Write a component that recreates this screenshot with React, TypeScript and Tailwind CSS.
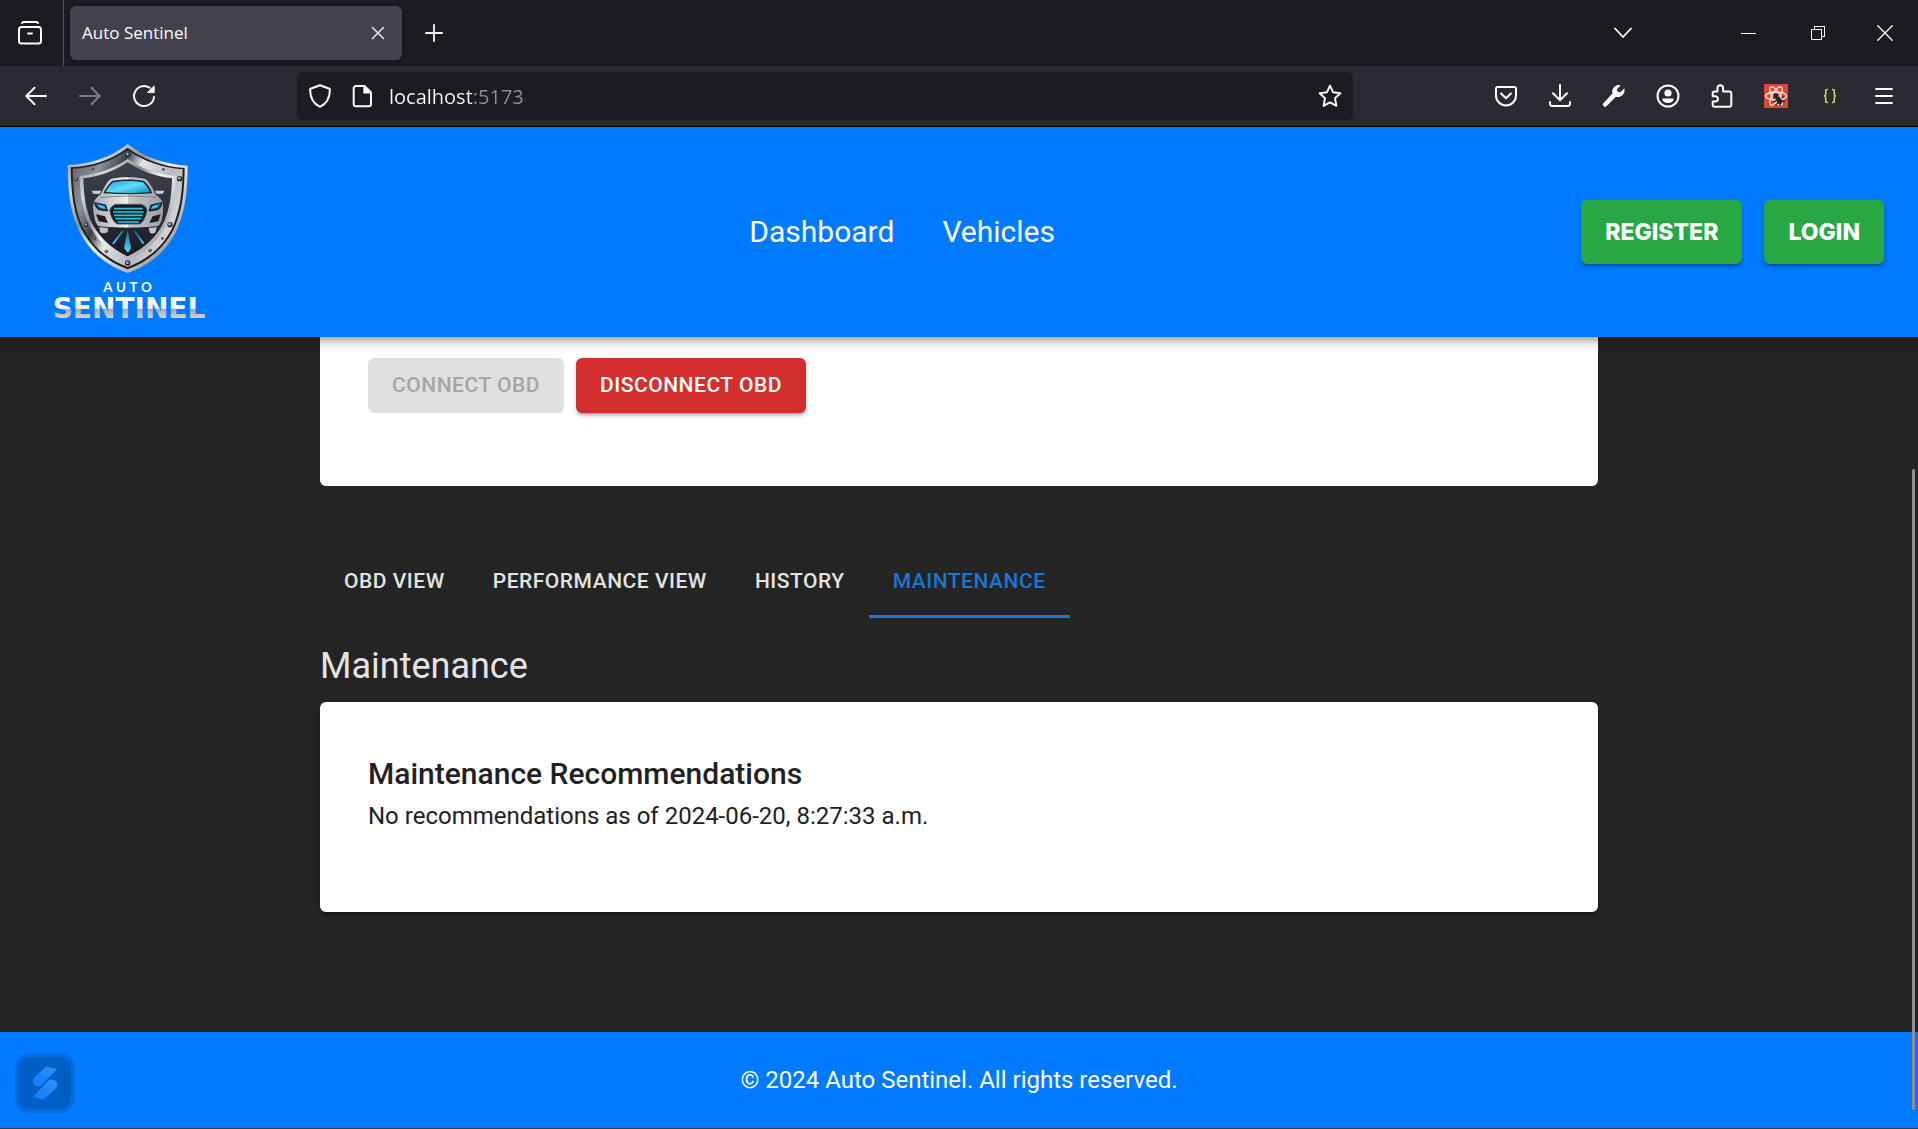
import type { ReactNode } from "react";

/* ---------- browser icons ---------- */

type IconProps = { size?: number; box?: string; sw?: number; className?: string; children: ReactNode };

function Icon({ size = 24, box = "0 0 24 24", sw = 2, className = "", children }: IconProps) {
  return (
    <svg
      aria-hidden="true"
      width={size}
      height={size}
      viewBox={box}
      fill="none"
      stroke="currentColor"
      strokeWidth={sw}
      strokeLinecap="round"
      strokeLinejoin="round"
      className={className}
    >
      {children}
    </svg>
  );
}

function ChromeButton({ label, className = "", children }: { label: string; className?: string; children: ReactNode }) {
  return (
    <button type="button" aria-label={label} className={"flex h-12 items-center justify-center " + className}>
      {children}
    </button>
  );
}

function ReactDevIcon() {
  return (
    <svg aria-hidden="true" width="24" height="24" viewBox="0 0 24 24" fill="none">
      <rect width="24" height="24" rx="1" fill="#da4735" />
      <g stroke="#fbe9e6" strokeWidth="1.3">
        <ellipse cx="12" cy="12" rx="10.4" ry="4" />
        <ellipse cx="12" cy="12" rx="10.4" ry="4" transform="rotate(60 12 12)" />
        <ellipse cx="12" cy="12" rx="10.4" ry="4" transform="rotate(120 12 12)" />
      </g>
      <g fill="#2b201d">
        <ellipse cx="15" cy="16.4" rx="2.6" ry="4" transform="rotate(-35 15 16.4)" />
        <circle cx="11.8" cy="11.7" r="2.2" />
      </g>
      <path
        d="M12 17l-3 .6M13.5 19l-2 2.4M17.5 14l2.8-1.2M18 17l2.6.6M15.8 20l.4 2M11 14.5l-2-.6"
        stroke="#2b201d"
        strokeWidth="1.3"
      />
    </svg>
  );
}

function TitleBar() {
  return (
    <div className="flex h-[66px] bg-[#1c1b22]">
      <ChromeButton label="Recent browsing" className="h-[66px]! w-16 border-r border-[#55545c] pr-[3px]">
        <Icon>
          <path d="M4 2C4.500 1.400 5 1.100 6 1.100h12c1 0 1.500.300 2 .900" />
          <rect x="1" y="6" width="22" height="16.500" rx="2.500" />
          <path d="M10 12.500h4" />
        </Icon>
      </ChromeButton>
      <div className="flex flex-1 items-center pl-1.5">
        <div className="flex h-[54px] w-[332px] items-center justify-between rounded-md bg-[#42414d] pl-3 pr-[17px] shadow-[0_0_4px_rgba(0,0,0,0.5)]">
          <span className="text-[17px] text-[#fbfbfe]">Auto Sentinel</span>
          <button type="button" aria-label="Close tab" className="text-[#e6e6ea]">
            <Icon size={14} box="0 0 14 14" sw={1.5}>
              <path d="M1.500 1.500l11 11M12.500 1.500l-11 11" />
            </Icon>
          </button>
        </div>
        <ChromeButton label="New tab" className="w-16">
          <Icon size={18} box="0 0 18 18" sw={1.800}>
            <path d="M9 .9v16.200M.9 9h16.200" />
          </Icon>
        </ChromeButton>
      </div>
      <div className="flex items-center">
        <ChromeButton label="List all tabs" className="w-16">
          <Icon size={18} box="0 0 18 18" sw={1.800}>
            <path d="M1 4.500l8 8.500 8-8.500" />
          </Icon>
        </ChromeButton>
        <div className="ml-[59px] flex">
          <ChromeButton label="Minimize" className="w-[69px]">
            <span className="block h-px w-[15px] bg-white" />
          </ChromeButton>
          <ChromeButton label="Restore" className="w-[69px]">
            <svg aria-hidden="true" width="14" height="14" viewBox="0 0 14 14" fill="none" stroke="white" shapeRendering="crispEdges">
              <path d="M.5 3.500h10v10h-10zM3.500 3v-2.500h10v10h-3" />
            </svg>
          </ChromeButton>
          <ChromeButton label="Close window" className="w-[66px]">
            <Icon size={16} box="0 0 16 16" sw={1.300}>
              <path d="M.8.8l14.400 14.400M15.200.8L.8 15.200" />
            </Icon>
          </ChromeButton>
        </div>
      </div>
    </div>
  );
}

function ToolBar() {
  return (
    <div className="flex h-[61px] items-center border-b border-black bg-[#2b2a33]">
      <div className="flex w-[297px] pl-[9px]">
        <ChromeButton label="Back" className="w-[54px]">
          <Icon>
            <path d="M22 12H2.500M10.500 3.800L2.300 12l8.200 8.200" />
          </Icon>
        </ChromeButton>
        <ChromeButton label="Forward" className="w-[54px] text-[#7c7b82]">
          <Icon>
            <path d="M2 12h19.500M13.500 3.800l8.200 8.200-8.200 8.200" />
          </Icon>
        </ChromeButton>
        <ChromeButton label="Reload" className="w-[54px]">
          <Icon>
            <path d="M22 13a10 10 0 1 1-4.300-9.200" />
            <path d="M22.200 2.200v6.300h-6.300z" fill="currentColor" strokeWidth="1" />
          </Icon>
        </ChromeButton>
      </div>
      <div className="flex h-12 max-w-[1056px] flex-1 items-center rounded-md bg-[#1c1b22] px-[11px]">
        <button type="button" aria-label="Tracking protection">
          <Icon>
            <path d="M12 1.200l9.500 3.600c.3.100.4.400.4.700 0 7.500-2.400 13.800-9.900 17.300C4.500 19.300 2.100 13 2.100 5.500c0-.3.100-.6.400-.7z" />
          </Icon>
        </button>
        <button type="button" aria-label="Site information" className="ml-[18px]">
          <Icon>
            <path d="M6 2h8.500L21 8.500V20a2.300 2.300 0 0 1-2.300 2.300H6A2.300 2.300 0 0 1 3.700 20V4.300A2.300 2.300 0 0 1 6 2z" />
            <path d="M14 2.200v6.600h6.700z" fill="currentColor" strokeWidth="1.500" />
          </Icon>
        </button>
        <input
          aria-label="Address"
          defaultValue="localhost:5173"
          className="ml-[15px] min-w-0 flex-1 bg-linear-to-r from-[#fbfbfe] from-[83px] to-[#8e8d93] to-[83px] bg-clip-text pt-0.5 text-[20px] text-transparent caret-white outline-none"
        />
        <button type="button" aria-label="Bookmark this page">
          <Icon sw={1.900}>
            <path d="M12 1.600l3.100 6.700 7.300.9-5.400 5 1.400 7.700L12 18.400l-6.400 3.500L7 14.200l-5.400-5 7.300-.9z" />
          </Icon>
        </button>
      </div>
      <div className="ml-auto flex pr-[7px]">
        <ChromeButton label="Save to Pocket" className="w-[54px]">
          <Icon>
            <path d="M4 3h16a2 2 0 0 1 2 2v6.500a10 10 0 0 1-20 0V5a2 2 0 0 1 2-2z" />
            <path d="M7 9.500l5 4.800 5-4.800" />
          </Icon>
        </ChromeButton>
        <ChromeButton label="Downloads" className="w-[54px]">
          <Icon>
            <path d="M12 1v15M5 9.300l7 7 7-7M2 18v1.500A2.500 2.500 0 0 0 4.500 22h15a2.500 2.500 0 0 0 2.500-2.500V18" />
          </Icon>
        </ChromeButton>
        <ChromeButton label="Developer tools" className="w-[54px]">
          <Icon>
            <path
              d="M22 5.500l-3.700 3.200-3.200-.6-.6-3L18 1.600a6 6 0 0 0-7 7.800L1.800 19.300c-.8.900-.6 2 .1 2.700.8.700 1.800.6 2.600-.2L14 12.200A6 6 0 0 0 22 5.500z"
              fill="currentColor"
              strokeWidth="1"
            />
          </Icon>
        </ChromeButton>
        <ChromeButton label="Account" className="w-[54px]">
          <Icon>
            <circle cx="12" cy="12" r="10.500" />
            <circle cx="12" cy="9" r="3.600" fill="currentColor" stroke="none" />
            <path d="M6.300 14.500h11.400c0 2.800-2.500 4.500-5.700 4.500s-5.700-1.700-5.700-4.500z" fill="currentColor" stroke="none" />
          </Icon>
        </ChromeButton>
        <ChromeButton label="Extensions" className="w-[54px]">
          <Icon>
            <path d="M7.500 7.500V4a2.800 2.800 0 0 1 5.600 0v3.500H19.500a1.800 1.800 0 0 1 1.800 1.800V21a1.800 1.800 0 0 1-1.800 1.800H4.500A1.800 1.800 0 0 1 2.700 21v-3.500h2.600a2.600 2.600 0 0 0 0-5.300H2.700v-3a1.800 1.800 0 0 1 1.800-1.700z" />
          </Icon>
        </ChromeButton>
        <ChromeButton label="React developer tools" className="w-[54px]">
          <ReactDevIcon />
        </ChromeButton>
        <ChromeButton label="JSON viewer" className="w-[54px]">
          <span className="flex h-6 w-6 items-center justify-center rounded-full bg-[#2b2b2a]">
            <svg aria-hidden="true" width="14" height="16" viewBox="0 0 14 16" fill="none" stroke="#d9cf6a" strokeWidth="1.600">
              <path d="M5 1.500H4.200C3 1.500 2.700 2.200 2.700 3v3c0 1.200-.7 2-1.700 2 1 0 1.700.8 1.700 2v3c0 .8.3 1.500 1.500 1.500H5M9 1.500h.8c1.200 0 1.500.7 1.500 1.500v3c0 1.200.7 2 1.700 2-1 0-1.700.8-1.700 2v3c0 .8-.3 1.500-1.500 1.500H9" />
            </svg>
          </span>
        </ChromeButton>
        <ChromeButton label="Menu" className="w-[54px]">
          <Icon size={20} box="0 0 20 20" sw={1.800}>
            <path d="M2 3h16M2 10h16M2 17h16" />
          </Icon>
        </ChromeButton>
      </div>
    </div>
  );
}

/* ---------- application ---------- */

function Logo() {
  const rivets: [number, number, number][] = [
    [263, 88, 8],
    [419, 161, 8],
    [108, 162, 6],
    [390, 299, 8],
    [139, 300, 6],
    [263, 414, 8],
    [158, 132, 4],
    [370, 133, 4],
    [367, 340, 4],
    [164, 340, 4],
    [199, 379, 5],
    [330, 376, 5],
  ];
  return (
    <svg role="img" aria-label="Auto Sentinel" width="189" height="210" viewBox="-18 6 567 630">
      <defs>
        <linearGradient id="rim" x1="0" y1="0" x2="1" y2="1">
          <stop offset="0" stopColor="#8e9197" />
          <stop offset="0.2" stopColor="#d5d6d9" />
          <stop offset="0.36" stopColor="#8b8e94" />
          <stop offset="0.5" stopColor="#f3f3f4" />
          <stop offset="0.7" stopColor="#c3c4c8" />
          <stop offset="1" stopColor="#6f7278" />
        </linearGradient>
        <linearGradient id="steel" x1="0" y1="0" x2="1" y2="0.5">
          <stop offset="0" stopColor="#54575f" />
          <stop offset="0.25" stopColor="#8f9298" />
          <stop offset="0.42" stopColor="#3c3f47" />
          <stop offset="0.55" stopColor="#e4e4e6" />
          <stop offset="0.8" stopColor="#b8b9bd" />
          <stop offset="1" stopColor="#d8d8da" />
        </linearGradient>
        <linearGradient id="inner" x1="0" y1="0" x2="0" y2="1">
          <stop offset="0" stopColor="#41444f" />
          <stop offset="1" stopColor="#171a26" />
        </linearGradient>
        <linearGradient id="glass" x1="0" y1="0" x2="1" y2="1">
          <stop offset="0" stopColor="#12a9dc" />
          <stop offset="0.5" stopColor="#5fdcf8" />
          <stop offset="1" stopColor="#0f8fc6" />
        </linearGradient>
        <linearGradient id="beam" x1="0" y1="0" x2="0" y2="1">
          <stop offset="0" stopColor="#0a6d99" />
          <stop offset="1" stopColor="#54dcff" />
        </linearGradient>
        <linearGradient id="body" x1="0" y1="0" x2="1" y2="0">
          <stop offset="0" stopColor="#a8aab0" />
          <stop offset="0.5" stopColor="#f2f2f3" />
          <stop offset="0.5" stopColor="#c9cacd" />
          <stop offset="1" stopColor="#9b9da3" />
        </linearGradient>
        <linearGradient id="word" gradientUnits="userSpaceOnUse" x1="0" y1="518" x2="0" y2="580">
          <stop offset="0" stopColor="#ffffff" />
          <stop offset="0.52" stopColor="#eef1f6" />
          <stop offset="0.56" stopColor="#9fabbc" />
          <stop offset="1" stopColor="#d3d6db" />
        </linearGradient>
      </defs>

      {/* shield layers, from the outer rim to the dark field */}
      <path
        d="M263 57C215 96 150 118 83 120C84 190 88 250 112 306C140 370 190 418 263 444C336 418 388 370 414 306C438 250 442 190 443 122C376 118 311 96 263 57Z"
        fill="url(#rim)"
      />
      <path
        d="M263 68C216 104 155 124 92 127C93 190 97 246 120 302C147 362 195 408 263 433C331 408 379 362 406 302C429 246 433 190 434 129C371 124 310 104 263 68Z"
        fill="#1d2029"
      />
      <path
        d="M263 74C216 109 158 128 98 131C99 190 103 244 125 299C151 358 198 402 263 426C328 402 375 358 401 299C423 244 427 190 428 133C368 128 310 109 263 74Z"
        fill="url(#steel)"
      />
      <path
        d="M263 102C221 131 171 148 119 153C120 202 125 247 143 290C166 340 208 382 263 406C318 382 360 340 383 290C401 247 406 202 407 153C355 148 305 131 263 102Z"
        fill="url(#rim)"
      />
      <path
        d="M263 111C222 139 178 154 130 160C131 203 135 245 152 286C173 333 212 371 263 394C314 371 353 333 374 286C391 245 395 203 396 160C348 154 304 139 263 111Z"
        fill="url(#inner)"
      />
      {rivets.map(([x, y, r]) => (
        <g key={x + "-" + y}>
          <circle cx={x} cy={y} r={r} fill="#23252d" />
          <circle cx={x - 1} cy={y - 1} r={r * 0.55} fill="#a7a9af" />
        </g>
      ))}

      {/* road lights */}
      <path d="M263 314L252 370L264 383L273 370Z" fill="url(#beam)" />
      <path d="M246 316L216 356L222 357L250 320Z" fill="url(#beam)" />
      <path d="M280 316L308 357L313 354L284 316Z" fill="url(#beam)" />

      {/* car */}
      <path d="M175 300h30v20c-8 8-20 8-26 0zM322 300h32l-6 22c-8 8-16 6-20 0z" fill="#c0c1c5" stroke="#23252d" strokeWidth="3" />
      <path
        d="M155 196h30v12h-22c-6 0-8-6-8-12zM374 196h-32v12h22c6 0 10-6 10-12z"
        fill="#c9cace"
        stroke="#23252d"
        strokeWidth="2"
      />
      <path
        d="M212 160C240 153 288 153 316 160C330 170 340 190 348 208C364 218 373 232 371 252C370 276 366 294 356 304C320 311 212 311 174 304C162 292 160 270 158 252C156 230 166 218 180 208C190 190 198 170 212 160Z"
        fill="url(#body)"
        stroke="#23252d"
        strokeWidth="3"
      />
      <path d="M216 168C244 162 284 162 312 168C324 178 332 192 337 205C290 209 238 209 190 205C196 192 206 178 216 168Z" fill="#23252d" />
      <path d="M219 172C246 167 282 167 309 172C318 180 325 191 330 201C288 205 240 205 197 201C202 191 210 180 219 172Z" fill="url(#glass)" />
      <path d="M180 218C225 212 300 212 350 218" stroke="#80838b" strokeWidth="3" fill="none" />
      <path d="M164 233L197 240L203 258L176 254Q166 248 164 233Z" fill="#16384d" stroke="#1b1e28" strokeWidth="3" />
      <path d="M170 237L193 243L197 252L180 249Z" fill="#27c6f3" />
      <path d="M366 233L333 240L327 258L354 254Q364 248 366 233Z" fill="#16384d" stroke="#1b1e28" strokeWidth="3" />
      <path d="M360 237L337 243L333 252L350 249Z" fill="#27c6f3" />
      <path d="M226 238H305Q320 244 321 256Q316 286 300 297H231Q214 286 209 256Q212 244 226 238Z" fill="#171b26" stroke="#55585f" strokeWidth="3" />
      <path d="M222 251H308M219 261H311M222 271H308M226 281H304M233 291H297" stroke="#2fc3dc" strokeWidth="5" />
      <path d="M168 268L195 274L204 294L176 289ZM362 268L338 274L328 294L355 289Z" fill="#1b1e28" />

      {/* word mark */}
      <text x="190" y="501" fontSize="40" fontFamily="Lato, sans-serif" fontWeight="700" letterSpacing="11" fill="#ffffff">
        AUTO
      </text>
      <text x="267" y="579" textAnchor="middle" fontSize="84" fontFamily="'DejaVu Sans', sans-serif" fontWeight="700" fill="url(#word)">
        SENTINEL
      </text>
    </svg>
  );
}

const raised = "shadow-[0_3px_2px_-2px_rgba(0,0,0,0.2),0_3px_3px_rgba(0,0,0,0.14),0_2px_7px_rgba(0,0,0,0.12)]";

function AppHeader() {
  return (
    <header className="relative z-10 flex h-[210px] items-center justify-between bg-[#007bff] px-[34px] text-white shadow-[0_3px_6px_-1px_rgba(0,0,0,0.2),0_6px_8px_rgba(0,0,0,0.14),0_2px_15px_rgba(0,0,0,0.12)]">
      <Logo />
      <nav className="flex text-[30px] leading-12">
        <a href="#dashboard" className="px-6">Dashboard</a>
        <a href="#vehicles" className="px-6">Vehicles</a>
      </nav>
      <div className="flex gap-[22px] font-['Inter'] text-[23px] font-extrabold">
        <button type="button" className={"h-16 rounded-md bg-[#28a745] px-6 " + raised}>REGISTER</button>
        <button type="button" className={"h-16 rounded-md bg-[#28a745] px-6 " + raised}>LOGIN</button>
      </div>
    </header>
  );
}

const tabs = ["OBD VIEW", "PERFORMANCE VIEW", "HISTORY", "MAINTENANCE"];

function Dashboard() {
  return (
    <main className="mx-auto w-full max-w-[1278px] flex-1">
      <section aria-label="Connection" className="flex gap-3 rounded-b-md bg-white px-12 pt-[21px] pb-[73px] text-[21px] font-medium tracking-wide">
        <button type="button" disabled className="h-[55px] rounded-md bg-[#e0e0e0] px-6 text-[#a6a6a6]">
          CONNECT OBD
        </button>
        <button type="button" className={"h-[55px] rounded-md bg-[#d32f2f] px-6 text-white " + raised}>
          DISCONNECT OBD
        </button>
      </section>
      <div role="tablist" aria-label="Views" className="mt-15 flex h-18 text-[21px] font-medium tracking-wide">
        {tabs.map((tab) => {
          const active = tab === "MAINTENANCE";
          return (
            <button
              key={tab}
              type="button"
              role="tab"
              aria-selected={active}
              className={
                active
                  ? "border-y-3 border-t-transparent border-b-[#1976d2] px-6 text-[#1976d2]"
                  : "px-6 text-[#e3e3e3]"
              }
            >
              {tab}
            </button>
          );
        })}
      </div>
      <h1 className="mt-6 text-[36px] leading-12 text-[#e3e3e3]">Maintenance</h1>
      <section className="mt-3 rounded-md bg-white px-12 pt-12 pb-[78px] text-[#212121] shadow-[0_3px_2px_-2px_rgba(0,0,0,0.3),0_2px_4px_rgba(0,0,0,0.3)]">
        <h2 className="text-[30px] leading-12 font-medium">Maintenance Recommendations</h2>
        <p className="text-[24px] leading-9">No recommendations as of 2024-06-20, 8:27:33 a.m.</p>
      </section>
    </main>
  );
}

function AppFooter() {
  return (
    <footer className="relative flex h-24 items-center justify-center bg-[#007bff] text-[24px] text-white">
      <p>© 2024 Auto Sentinel. All rights reserved.</p>
      <button
        type="button"
        aria-label="Open side panel"
        className="absolute top-[21px] left-[15px] flex size-15 items-center justify-center rounded-[15px] border-4 border-[#006de0] bg-[#005fc4]"
      >
        <svg aria-hidden="true" width="26" height="34" viewBox="0 0 26 34">
          <defs>
            <linearGradient id="bolt" x1="1" y1="0" x2="0" y2="1">
              <stop offset="0" stopColor="#3391ff" />
              <stop offset="1" stopColor="#0a7bf8" />
            </linearGradient>
          </defs>
          <path d="M14 .5L25 3L8 20.500C4 21 .5 18.500 .8 14.500Q.9 13 2 12Z" fill="url(#bolt)" />
          <path d="M17.500 13.500C22 13 25.500 15.500 25.300 19Q25.200 21 24 22L12 33.500L.5 31Z" fill="url(#bolt)" />
        </svg>
      </button>
    </footer>
  );
}

export default function App() {
  return (
    <div className="relative flex min-h-screen flex-col border-b border-[#3b3b45] bg-[#242424] font-['Roboto',sans-serif]">
      <div className="font-['Open_Sans',sans-serif] text-[#fbfbfe]">
        <TitleBar />
        <ToolBar />
      </div>
      <AppHeader />
      <Dashboard />
      <AppFooter />
      <div aria-hidden="true" className="absolute right-[3px] bottom-[18px] z-20 h-[641px] w-[3px] rounded-full bg-[#8f8f8f]" />
    </div>
  );
}
